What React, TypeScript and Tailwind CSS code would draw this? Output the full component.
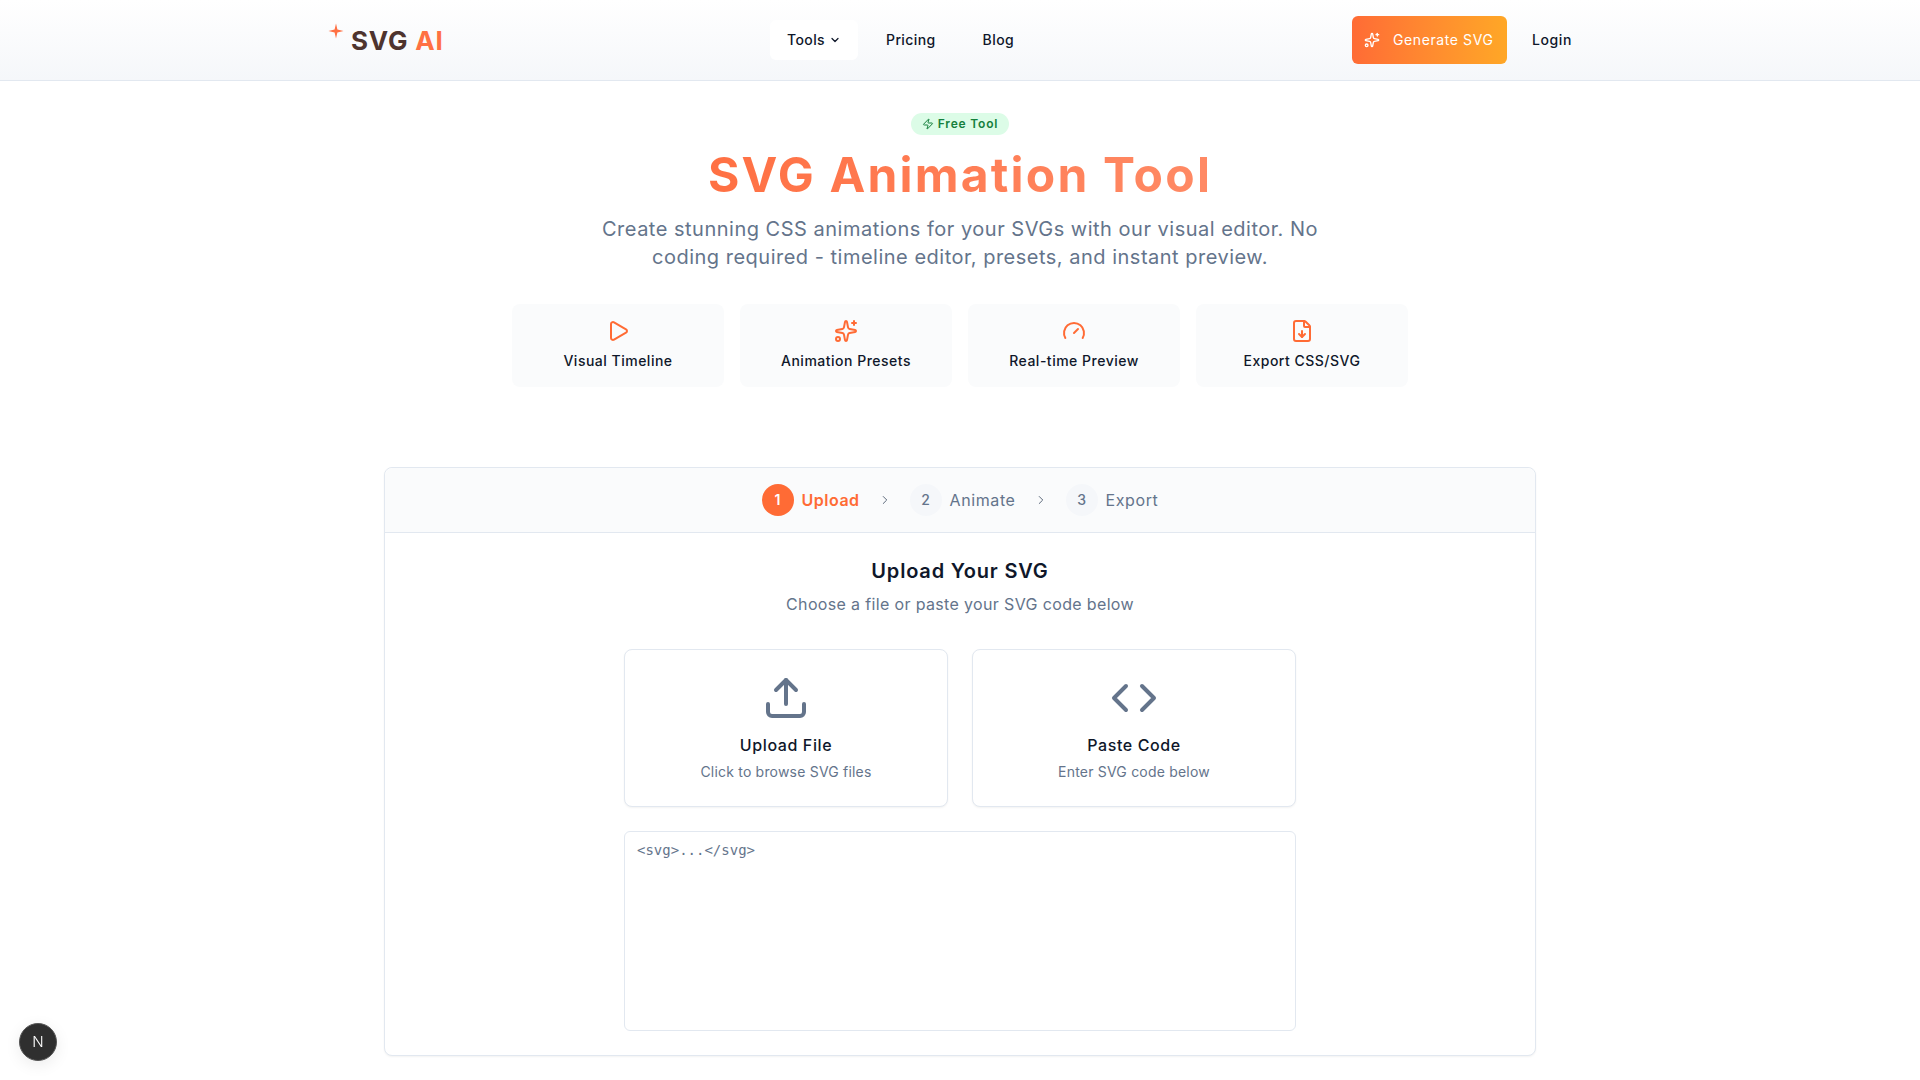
import { ChevronDown, ChevronRight, Code, FileDown, Gauge, Play, Sparkles, Upload, Zap } from 'lucide-react';

const features = [
  { label: 'Visual Timeline', icon: Play },
  { label: 'Animation Presets', icon: Sparkles },
  { label: 'Real-time Preview', icon: Gauge },
  { label: 'Export CSS/SVG', icon: FileDown },
];

const heading = { fontFamily: 'Inter, sans-serif' };

function Step({ n, label, active }: { n: number; label: string; active?: boolean }) {
  return (
    <div className="flex items-center gap-2">
      <div
        className={
          active
            ? 'flex h-8 w-8 items-center justify-center rounded-full bg-[#ff6b35] text-sm font-semibold text-white'
            : 'flex h-8 w-8 items-center justify-center rounded-full bg-[#f5f7fa] text-sm font-medium text-[#64748b]'
        }
      >
        {n}
      </div>
      <span
        className={
          active
            ? 'text-base font-semibold tracking-[0.5px] text-[#ff6b35]'
            : 'text-base tracking-[0.6px] text-[#64748b]'
        }
      >
        {label}
      </span>
    </div>
  );
}

function OptionCard({ icon: Icon, title, sub }: { icon: typeof Upload; title: string; sub: string }) {
  return (
    <div className="flex h-[158px] flex-col items-center rounded-lg border border-[#e2e8f0] bg-white pt-6 shadow-[0_1px_2px_rgba(0,0,0,0.05)]">
      <Icon className="h-12 w-12 text-[#64748b]" strokeWidth={2} />
      <div className="mt-[11px] text-base font-medium leading-6 tracking-[0.6px] text-[#0f172a]">{title}</div>
      <div className="mt-[5px] text-sm leading-5 tracking-[0.2px] text-[#64748b]">{sub}</div>
    </div>
  );
}

export default function App() {
  return (
    <div className="min-h-screen bg-white text-[#0f172a]" style={heading}>
      <header className="flex h-[81px] items-center border-b border-[#e2e8f0] bg-gradient-to-b from-white to-[#f5f7fa] pl-[328px] pr-[348px]">
        <div className="relative flex w-[442px] items-center">
          <svg className="absolute left-0 top-[2px] h-4 w-4" viewBox="0 0 16 16" fill="#ff7043">
            <path d="M8 0.5 9.4 6.6 15.5 8 9.4 9.4 8 15.5 6.6 9.4 0.5 8 6.6 6.6Z" />
          </svg>
          <span className="ml-[23px] text-[26px] font-bold tracking-[0.8px] text-[#4e342e]">
            SVG <span className="text-[#ff7043]">AI</span>
          </span>
        </div>
        <nav className="flex items-center text-sm font-medium tracking-[0.4px]">
          <div className="flex h-10 w-[88px] items-center justify-center gap-1 rounded-md bg-white">
            Tools <ChevronDown className="h-3 w-3" strokeWidth={2.5} />
          </div>
          <div className="ml-7">Pricing</div>
          <div className="ml-[47px]">Blog</div>
        </nav>
        <div className="ml-auto flex items-center">
          <div className="flex h-12 w-[155px] items-center rounded-md bg-gradient-to-r from-[#ff6b35] to-[#ffa726] pl-3 text-sm tracking-[0.6px] text-white">
            <Sparkles className="h-4 w-4" />
            <span className="ml-[13px]">Generate SVG</span>
          </div>
          <div className="ml-[25px] text-sm font-medium tracking-[0.6px]">Login</div>
        </div>
      </header>

      <section className="flex flex-col items-center pt-8">
        <div className="flex h-[22px] items-center gap-1 rounded-full bg-[#dcfce7] px-[11px] text-xs font-semibold tracking-[0.8px] text-[#15803d]">
          <Zap className="h-3 w-3" />
          Free Tool
        </div>
        <h1 className="mt-[10px] bg-gradient-to-r from-[#ff7043] to-[#ff8a65] bg-clip-text text-5xl font-bold leading-[60px] tracking-[2.2px] text-transparent">
          SVG Animation Tool
        </h1>
        <p className="mt-[10px] w-[768px] text-center text-xl leading-7 tracking-[0.5px] text-[#64748b]">
          Create stunning CSS animations for your SVGs with our visual editor. No coding required - timeline editor,
          presets, and instant preview.
        </p>
        <div className="mt-[33px] grid w-[896px] grid-cols-4 gap-4">
          {features.map(({ label, icon: Icon }) => (
            <div key={label} className="flex h-[83px] flex-col items-center rounded-lg bg-[#fafbfc] pt-[15px]">
              <Icon className="h-6 w-6 text-[#ff6b35]" />
              <div className="mt-2 text-sm font-medium leading-5 tracking-[0.5px]">{label}</div>
            </div>
          ))}
        </div>
      </section>

      <main className="mx-auto mt-20 w-[1152px] rounded-lg border border-[#e2e8f0] bg-white shadow-[0_1px_2px_rgba(0,0,0,0.05)]">
        <div className="flex h-[65px] items-center justify-center gap-[18px] rounded-t-lg border-b border-[#e2e8f0] bg-[#fafbfc]">
          <Step n={1} label="Upload" active />
          <ChevronRight className="h-3.5 w-3.5 text-[#475569]" strokeWidth={1.5} />
          <Step n={2} label="Animate" />
          <ChevronRight className="h-3.5 w-3.5 text-[#475569]" strokeWidth={1.5} />
          <Step n={3} label="Export" />
        </div>
        <div className="flex flex-col items-center px-6 pb-6 pt-6">
          <h2 className="text-xl font-semibold leading-7 tracking-[0.8px]">Upload Your SVG</h2>
          <p className="mt-[7px] text-base leading-6 tracking-[0.35px] text-[#64748b]">
            Choose a file or paste your SVG code below
          </p>
          <div className="mt-[33px] w-[672px]">
            <div className="grid grid-cols-2 gap-6">
              <OptionCard icon={Upload} title="Upload File" sub="Click to browse SVG files" />
              <OptionCard icon={Code} title="Paste Code" sub="Enter SVG code below" />
            </div>
            <textarea
              readOnly
              placeholder="<svg>...</svg>"
              className="mt-6 block h-[200px] w-full resize-none rounded-md border border-[#e2e8f0] px-3 py-2 text-sm leading-5 outline-none placeholder:text-[#64748b]"
              style={{ fontFamily: '"DejaVu Sans Mono", monospace' }}
            />
          </div>
        </div>
      </main>

      <div className="fixed bottom-[19px] left-[19px] flex h-[38px] w-[38px] items-center justify-center rounded-full border border-[#555] bg-[#2f2f2f] text-[15px] font-light text-white shadow-[0_4px_16px_rgba(0,0,0,0.08)]">
        N
      </div>
    </div>
  );
}
